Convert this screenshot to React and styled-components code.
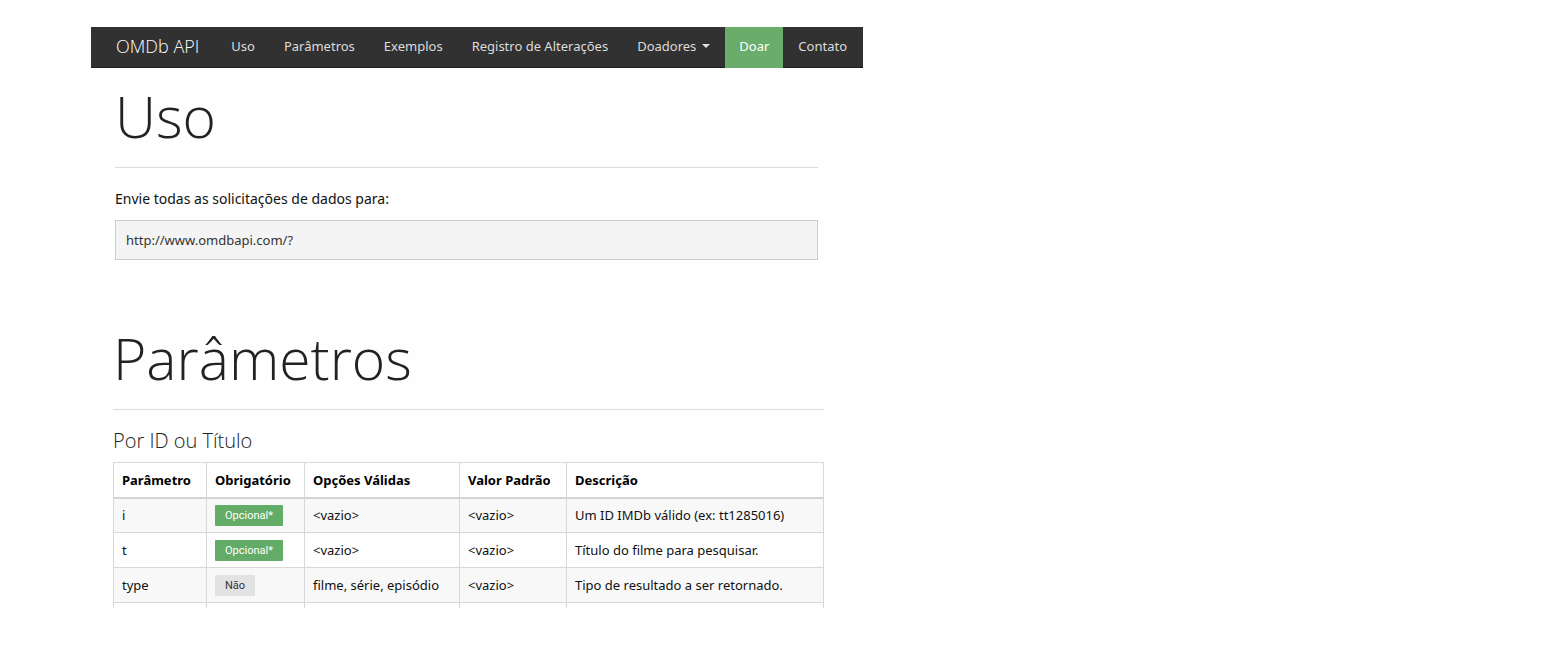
import React from "react";
import styled, { createGlobalStyle } from "styled-components";

const navLinks = [
  { id: 1, text: "Uso", url: "#uso" },
  { id: 2, text: "Parâmetros", url: "#parametros" },
  { id: 3, text: "Exemplos", url: "#exemplos" },
  { id: 4, text: "Registro de Alterações", url: "#alteracoes" },
];

const columns = [
  { title: "Parâmetro", width: "93px" },
  { title: "Obrigatório", width: "98px" },
  { title: "Opções Válidas", width: "155px" },
  { title: "Valor Padrão", width: "107px" },
  { title: "Descrição", width: "auto" },
];

const parameters = [
  {
    name: "i",
    optional: true,
    options: "<vazio>",
    initial: "<vazio>",
    desc: "Um ID IMDb válido (ex: tt1285016)",
  },
  {
    name: "t",
    optional: true,
    options: "<vazio>",
    initial: "<vazio>",
    desc: "Título do filme para pesquisar.",
  },
  {
    name: "type",
    optional: false,
    options: "filme, série, episódio",
    initial: "<vazio>",
    desc: "Tipo de resultado a ser retornado.",
  },
];

const App = () => {
  return (
    <>
      <GlobalStyle />
      <Page>
        <Navbar>
          <Brand href="#top">OMDb API</Brand>
          {navLinks.map(({ id, text, url }) => (
            <NavLink key={id} href={url}>
              {text}
            </NavLink>
          ))}
          <NavToggle type="button" aria-haspopup="true">
            Doadores
            <Caret />
          </NavToggle>
          <NavLink href="#doar" $active>
            Doar
          </NavLink>
          <NavLink href="#contato">Contato</NavLink>
        </Navbar>

        <main>
          <Usage id="uso">
            <Title>Uso</Title>
            <Lead>Envie todas as solicitações de dados para:</Lead>
            <Well>http://www.omdbapi.com/?</Well>
          </Usage>

          <Parameters id="parametros">
            <Title>Parâmetros</Title>
            <Subtitle id="by-id">Por ID ou Título</Subtitle>
            <Table aria-labelledby="by-id">
              <colgroup>
                {columns.map(({ title, width }) => (
                  <Col key={title} $width={width} />
                ))}
              </colgroup>
              <thead>
                <tr>
                  {columns.map(({ title }) => (
                    <HeadCell key={title}>{title}</HeadCell>
                  ))}
                </tr>
              </thead>
              <tbody>
                {parameters.map(({ name, optional, options, initial, desc }) => (
                  <Row key={name}>
                    <Cell>{name}</Cell>
                    <Cell>
                      <Badge $optional={optional}>
                        {optional ? "Opcional*" : "Não"}
                      </Badge>
                    </Cell>
                    <Cell>{options}</Cell>
                    <Cell>{initial}</Cell>
                    <Cell>{desc}</Cell>
                  </Row>
                ))}
                {/* the table carries on below, only its first pixels show */}
                <tr aria-hidden="true">
                  {columns.map(({ title }) => (
                    <CutCell key={title} />
                  ))}
                </tr>
              </tbody>
            </Table>
          </Parameters>
        </main>
      </Page>
    </>
  );
};

const GlobalStyle = createGlobalStyle`
  * {
    box-sizing: border-box;
  }
  body {
    margin: 0;
    background: #fefefe;
    color: #111;
    font-family: "Noto Sans", "Open Sans", sans-serif;
    font-size: 13px;
    line-height: 20px;
  }
`;

const Page = styled.div`
  max-width: 863px;
  padding: 27px 0 64px 91px;
`;

const Navbar = styled.nav`
  display: flex;
  gap: 1px;
  height: 41px;
  padding-left: 10px;
  background: #313131;
  border-bottom: 1px solid #1c1c1c;
`;

const NavLink = styled.a`
  display: flex;
  align-items: center;
  height: 41px;
  padding: 0 14px 4px;
  color: ${({ $active }) => ($active ? "#fff" : "#dcdcdc")};
  background: ${({ $active }) => ($active ? "#6aac6c" : "transparent")};
  font-size: 13px;
  text-decoration: none;
  white-space: nowrap;
`;

const Brand = styled(NavLink)`
  color: #fff;
  font-family: "Open Sans", sans-serif;
  font-size: 18px;
  font-weight: 300;
  padding: 0 17px 4px 15px;
`;

const NavToggle = styled(NavLink).attrs({ as: "button" })`
  gap: 6px;
  border: 0;
  font-family: inherit;
`;

const Caret = styled.span`
  border-top: 4px solid #e0e0e0;
  border-left: 4px solid transparent;
  border-right: 4px solid transparent;
`;

const Usage = styled.section`
  padding: 16px 45px 66px 24px;
`;

const Parameters = styled.section`
  padding: 0 39px 0 22px;
`;

const Title = styled.h1`
  margin: 0 0 21px;
  padding-bottom: 19px;
  border-bottom: 1px solid #dcdcdc;
  color: #222;
  font-family: "Open Sans", sans-serif;
  font-size: 57px;
  font-weight: 300;
  line-height: 64px;
`;

const Lead = styled.p`
  margin: 0 0 11px;
  font-size: 14px;
`;

const Well = styled.pre`
  margin: 0;
  padding: 9px 10px;
  border: 1px solid #ccc;
  background: #f4f4f4;
  color: #333;
  font-family: inherit;
  font-size: 13px;
`;

const Subtitle = styled.h2`
  margin: 0 0 11px;
  color: #222;
  font-family: "Open Sans", sans-serif;
  font-size: 20px;
  font-weight: 300;
  line-height: 20px;
`;

const Table = styled.table`
  width: 100%;
  table-layout: fixed;
  border-collapse: collapse;
`;

const Col = styled.col`
  width: ${({ $width }) => $width};
`;

const HeadCell = styled.th`
  height: 35px;
  padding: 0 8px;
  border: 1px solid #d8d8d8;
  border-bottom: 2px solid #d4d4d4;
  color: #000;
  font-weight: 700;
  text-align: left;
  white-space: nowrap;
`;

const Row = styled.tr`
  &:nth-child(odd) {
    background: #f8f8f8;
  }
`;

const Cell = styled.td`
  height: 35px;
  padding: 0 8px;
  border: 1px solid #d8d8d8;
  white-space: nowrap;
`;

const CutCell = styled.td`
  height: 5px;
  padding: 0;
  border: 1px solid #d8d8d8;
  border-bottom: 0;
`;

const Badge = styled.span`
  display: inline-block;
  vertical-align: middle;
  padding: 0 10px;
  border-radius: 1px;
  background: ${({ $optional }) => ($optional ? "#62ac67" : "#e2e2e2")};
  color: ${({ $optional }) => ($optional ? "#fff" : "#333")};
  font-family: Roboto, sans-serif;
  font-size: 11px;
  line-height: 21px;
`;

export default App;
